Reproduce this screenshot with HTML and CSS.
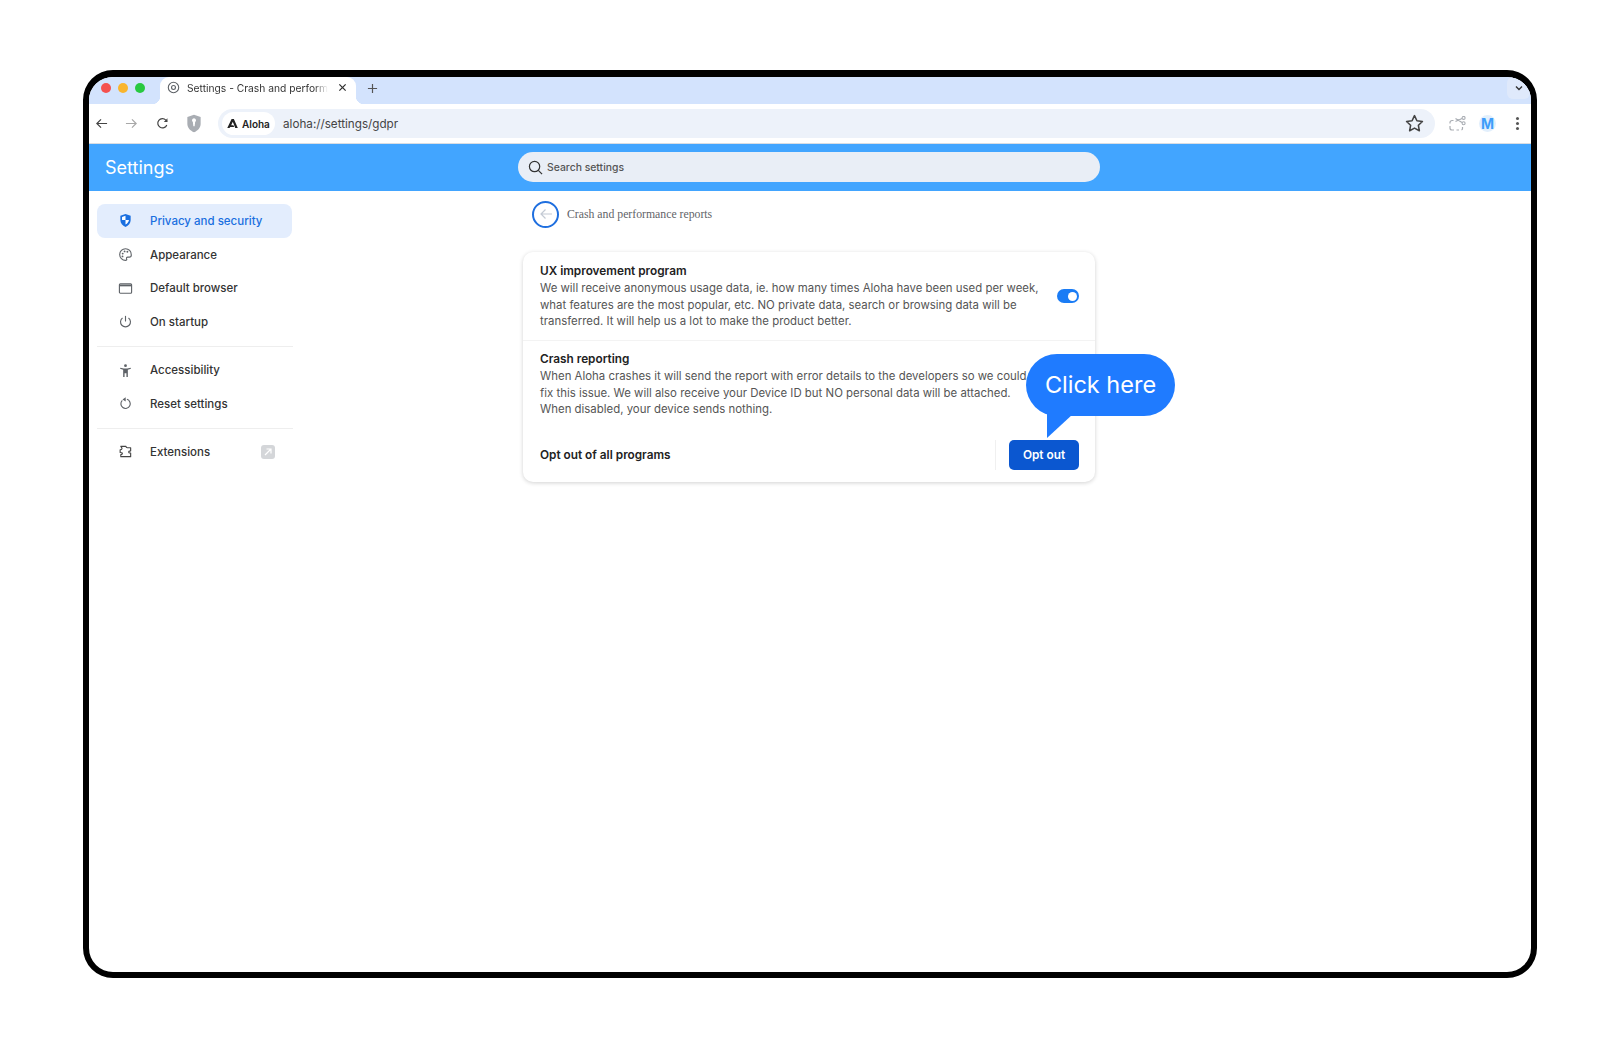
FILE: index.html
```html
<!DOCTYPE html>
<html lang="en">
<head>
  <meta charset="UTF-8">
  <title>Settings - Crash and performance reports</title>
  <link rel="stylesheet" href="styles.css">
</head>
<body>
  <div class="frame">
    <div class="tabstrip">
      <div class="lights">
        <span class="light red"></span>
        <span class="light yellow"></span>
        <span class="light green"></span>
      </div>
      <div class="tab">
        <svg class="tab-icon" viewBox="0 0 14 14"><circle cx="7" cy="7" r="5.6" fill="none" stroke="#5f6368" stroke-width="1.2"/><circle cx="7" cy="7" r="2.1" fill="none" stroke="#5f6368" stroke-width="1.2"/></svg>
        <span class="tab-title">Settings - Crash and performance reports</span>
        <svg class="tab-close" viewBox="0 0 10 10"><path d="M1.5 1.5l7 7M8.5 1.5l-7 7" stroke="#333" stroke-width="1.4" fill="none"/></svg>
      </div>
      <svg class="tab-new" viewBox="0 0 12 12"><path d="M6 1v10M1 6h10" stroke="#555" stroke-width="1.3" fill="none"/></svg>
      <div class="tab-menu">
        <svg viewBox="0 0 10 10" width="10" height="10"><path d="M2 3.500l3 3 3-3" stroke="#333" stroke-width="1.4" fill="none"/></svg>
      </div>
    </div>

    <div class="toolbar">
      <svg class="nav-icon first" viewBox="0 0 14 14"><path d="M13 7H2M6.500 2.500L2 7l4.500 4.500" stroke="#444" stroke-width="1.3" fill="none"/></svg>
      <svg class="nav-icon" viewBox="0 0 14 14"><path d="M1 7h11M7.500 2.500L12 7l-4.500 4.500" stroke="#a8a8a8" stroke-width="1.3" fill="none"/></svg>
      <svg class="nav-icon reload" viewBox="0 0 14 14"><path d="M11.600 8.600A5 5 0 1 1 10.600 3.400L12 4.800" stroke="#444" stroke-width="1.3" fill="none"/><path d="M12.300 1.400v3.900H8.400z" fill="#444"/></svg>
      <svg class="shield" viewBox="0 0 16 20"><path d="M8 .8l7 2.400v7c0 4.200-3 7.300-7 9-4-1.700-7-4.800-7-9v-7z" fill="#a9adb3"/><path d="M8 4.500a2.200 2.200 0 0 1 1.200 4l-.5 4.500H7.300l-.5-4.500a2.200 2.200 0 0 1 1.200-4z" fill="#fff"/></svg>
      <div class="addressbar">
        <div class="chip">
          <svg class="chip-logo" viewBox="0 0 12 12"><path d="M5 1h2.500L11.800 11H9L6.300 4.200 4.600 8H7l.8 1.800H3.600L2.700 11H.3z" fill="#222"/></svg>
          <span>Aloha</span>
        </div>
        <span class="url">aloha://settings/gdpr</span>
        <svg class="star" viewBox="0 0 18 18"><path d="M9 1.600l2.300 4.800 5.200.7-3.800 3.600.9 5.200L9 13.400 4.400 15.900l.9-5.200L1.500 7.100l5.200-.7z" fill="none" stroke="#444" stroke-width="1.500" stroke-linejoin="round"/></svg>
      </div>
      <svg class="scissors" viewBox="0 0 17 15"><path d="M1 7.500V6.500a2 2 0 0 1 2-2h1.500M1 10v2a2 2 0 0 0 2 2h2M7.500 14H10M12.500 14a1.500 1.500 0 0 0 1-1.500V11M6.500 5.500l6.500-3M6.500 2.500L13 6.500" fill="none" stroke="#a9adb3" stroke-width="1.200"/><circle cx="14.600" cy="1.900" r="1.500" fill="none" stroke="#a9adb3" stroke-width="1.100"/><circle cx="14.600" cy="7.300" r="1.500" fill="none" stroke="#a9adb3" stroke-width="1.100"/></svg>
      <div class="avatar">M</div>
      <div class="kebab"><span></span><span></span><span></span></div>
    </div>

    <div class="settings-head">
      <div class="settings-title">Settings</div>
      <div class="search">
        <svg class="search-icon" viewBox="0 0 16 16"><circle cx="7" cy="7" r="5.500" fill="none" stroke="#333" stroke-width="1.300"/><path d="M11 11l4 4" stroke="#333" stroke-width="1.300"/></svg>
        <span>Search settings</span>
      </div>
    </div>

    <div class="content">
      <div class="sidebar">
        <div class="nav-item active">
          <svg class="item-icon" viewBox="0 0 16 16"><path d="M8 1l5.500 2v4.500c0 3.500-2.300 6-5.500 7.500-3.200-1.500-5.500-4-5.500-7.500V3z" fill="#1a6fe0"/><path d="M8 3v4.500h3.700c-.2 2-1.600 3.700-3.700 4.800V7.500H4.300V4.200z" fill="#fff"/></svg>
          <span>Privacy and security</span>
        </div>
        <div class="nav-item">
          <svg class="item-icon" viewBox="0 0 16 16"><path d="M8 1.800a6.200 6.200 0 1 0 0 12.400c1.200 0 1.500-.8 1.200-1.500-.4-1 .1-1.900 1.200-1.900h1.700c1.300 0 2.100-1 2.100-2.300C14.200 4.600 11.500 1.800 8 1.800z" fill="none" stroke="#5f6368" stroke-width="1.200"/><circle cx="5" cy="7" r="1" fill="#5f6368"/><circle cx="7" cy="4.700" r="1" fill="#5f6368"/><circle cx="10" cy="5" r="1" fill="#5f6368"/><circle cx="4.800" cy="10" r="1" fill="#5f6368"/></svg>
          <span>Appearance</span>
        </div>
        <div class="nav-item">
          <svg class="item-icon" viewBox="0 0 16 16"><rect x="1.500" y="3" width="13" height="10" rx="1" fill="none" stroke="#5f6368" stroke-width="1.200"/><path d="M1.500 4.800h13" stroke="#5f6368" stroke-width="1.800"/></svg>
          <span>Default browser</span>
        </div>
        <div class="nav-item">
          <svg class="item-icon" viewBox="0 0 16 16"><path d="M8 2v6" stroke="#5f6368" stroke-width="1.200" fill="none"/><path d="M4.800 4.200a5.300 5.300 0 1 0 6.400 0" stroke="#5f6368" stroke-width="1.200" fill="none"/></svg>
          <span>On startup</span>
        </div>
        <div class="nav-divider"></div>
        <div class="nav-item">
          <svg class="item-icon" viewBox="0 0 16 16"><circle cx="8" cy="2.800" r="1.500" fill="#5f6368"/><path d="M2.500 5l3.800.9h3.400l3.800-.9.300 1.200-3.300 1V15H9V11H7v4H5.500V7.200L2.200 6.200z" fill="#5f6368"/></svg>
          <span>Accessibility</span>
        </div>
        <div class="nav-item">
          <svg class="item-icon" viewBox="0 0 16 16"><path d="M9.500 3.500A5 5 0 1 1 4.600 4.700" fill="none" stroke="#5f6368" stroke-width="1.200"/><path d="M8.200 1.300v4.600L4.800 3.600z" fill="#5f6368"/></svg>
          <span>Reset settings</span>
        </div>
        <div class="nav-divider"></div>
        <div class="nav-item">
          <svg class="item-icon" viewBox="0 0 16 16"><path d="M3 2.500h5.500c0 1 .5 1.500 1.500 1.500h3.500v3.300c-1.500 0-2.200.5-2.200 1.200s.7 1.200 2.200 1.200v3.800H3v-2.200c.9 0 1.700-.5 1.700-1.400S3.900 9 2.300 9V6.200c1 0 2-.3 2-1.300S3.500 3.600 3 2.500z" fill="none" stroke="#444" stroke-width="1.200" stroke-linejoin="round"/></svg>
          <span>Extensions</span>
          <span class="ext-link">
            <svg viewBox="0 0 10 10" width="10" height="10"><path d="M2 8l6-6M3.500 2H8v4.500" stroke="#fff" stroke-width="1.200" fill="none"/></svg>
          </span>
        </div>
      </div>

      <div class="main">
        <div class="subpage-head">
          <div class="back-btn">
            <svg viewBox="0 0 14 14" width="14" height="14"><path d="M13 7H2M6.500 2.500L2 7l4.500 4.500" stroke="#c3cad4" stroke-width="1.200" fill="none"/></svg>
          </div>
          <span class="subpage-title">Crash and performance reports</span>
        </div>

        <div class="card">
          <div class="card-row first-row">
            <div class="row-text">
              <div class="row-title">UX improvement program</div>
              <div class="row-desc">We will receive anonymous usage data, ie. how many times Aloha have been used per week, what features are the most popular, etc. NO private data, search or browsing data will be transferred. It will help us a lot to make the product better.</div>
            </div>
            <div class="toggle"><span class="knob"></span></div>
          </div>
          <div class="card-row second-row">
            <div class="row-text">
              <div class="row-title">Crash reporting</div>
              <div class="row-desc">When Aloha crashes it will send the report with error details to the developers so we could fix this issue. We will also receive your Device ID but NO personal data will be attached. When disabled, your device sends nothing.</div>
            </div>
          </div>
          <div class="opt-row">
            <div class="row-title">Opt out of all programs</div>
            <div class="opt-action">
              <button class="opt-btn">Opt out</button>
            </div>
          </div>

          <div class="callout">
            <span>Click here</span>
            <svg class="callout-tail" viewBox="0 0 26 24"><path d="M0 0h26L0 24z" fill="#1f7bff"/></svg>
          </div>
        </div>
      </div>
    </div>
  </div>
</body>
</html>
```

FILE: styles.css
```css
* {
  box-sizing: border-box;
}
body {
  margin: 0;
  padding: 70px 83px 0;
  background: #fff;
  font-family: Inter, "Liberation Sans", sans-serif;
  color: #222;
}
.frame {
  width: 1454px;
  height: 908px;
  border: 6px solid #000;
  border-top-width: 7px;
  border-radius: 30px;
  overflow: hidden;
  background: #fff;
  display: flex;
  flex-direction: column;
}

/* browser chrome */
.tabstrip {
  height: 27px;
  background: #d3e3fd;
  display: flex;
  align-items: center;
  flex-shrink: 0;
}
.lights {
  display: flex;
  gap: 7px;
  padding-left: 12px;
  width: 71px;
  margin-bottom: 5px;
}
.light {
  width: 10px;
  height: 10px;
  border-radius: 50%;
}
.red { background: #f4504e; }
.yellow { background: #f9b52e; }
.green { background: #28c940; }
.tab {
  position: relative;
  width: 196px;
  height: 27px;
  background: #fff;
  border-radius: 9px 9px 0 0;
  display: flex;
  align-items: center;
  padding: 0 0 6px 7px;
  font-size: 10.250px;
  color: #333;
}
.tab::before,
.tab::after {
  content: "";
  position: absolute;
  bottom: 0;
  width: 8px;
  height: 8px;
}
.tab::before {
  left: -8px;
  background: radial-gradient(circle at 0 0, #d3e3fd 8px, #fff 8.5px);
}
.tab::after {
  right: -8px;
  background: radial-gradient(circle at 100% 0, #d3e3fd 8px, #fff 8.5px);
}
.tab-icon {
  width: 13px;
  height: 13px;
  flex-shrink: 0;
}
.tab-title {
  margin-left: 7px;
  width: 141px;
  white-space: nowrap;
  overflow: hidden;
  -webkit-mask-image: linear-gradient(to right, #000 90%, transparent);
  mask-image: linear-gradient(to right, #000 90%, transparent);
}
.tab-close {
  width: 9px;
  height: 9px;
  margin-left: 10px;
}
.tab-new {
  width: 11px;
  height: 11px;
  margin: 0 0 5px 11px;
}
.tab-menu {
  margin-left: auto;
  margin-right: 1px;
  width: 23px;
  height: 22px;
  margin-top: -5px;
  border-radius: 6px;
  background: #dfe9fb;
  display: flex;
  align-items: center;
  justify-content: center;
}
.toolbar {
  height: 40px;
  background: #fff;
  border-bottom: 1px solid #d9dde3;
  display: flex;
  align-items: center;
  flex-shrink: 0;
}
.nav-icon {
  width: 13px;
  height: 13px;
  margin-left: 17px;
}
.nav-icon.first {
  margin-left: 6px;
}
.nav-icon.reload {
  margin-left: 18px;
}
.shield {
  width: 16px;
  height: 19px;
  margin-left: 17px;
}
.addressbar {
  width: 1217px;
  height: 29px;
  margin-left: 16px;
  background: #edf2fa;
  border-radius: 15px;
  display: flex;
  align-items: center;
  padding: 0 11px 0 4px;
}
.chip {
  width: 53px;
  height: 23px;
  background: #fff;
  border-radius: 12px;
  display: flex;
  align-items: center;
  padding-left: 5px;
  font-size: 10px;
  font-weight: 600;
}
.chip-logo {
  width: 11px;
  height: 11px;
  margin-right: 4px;
}
.url {
  margin-left: 8px;
  font-size: 11.700px;
  color: #444;
}
.star {
  width: 19px;
  height: 19px;
  margin-left: auto;
}
.scissors {
  width: 17px;
  height: 15px;
  margin-left: 14px;
}
.avatar {
  width: 17px;
  height: 17px;
  margin-left: 13px;
  border-radius: 50%;
  background: #e2effc;
  color: #3e9dfa;
  font-size: 14px;
  font-weight: 700;
  line-height: 17px;
  text-align: center;
}
.kebab {
  margin-left: 20px;
  display: flex;
  flex-direction: column;
  gap: 2px;
}
.kebab span {
  width: 3px;
  height: 3px;
  border-radius: 50%;
  background: #555;
}

/* settings header */
.settings-head {
  height: 47px;
  background: #42a5ff;
  display: flex;
  align-items: center;
  flex-shrink: 0;
}
.settings-title {
  width: 429px;
  padding-left: 16px;
  color: #fff;
  font-size: 18px;
}
.search {
  width: 582px;
  height: 30px;
  margin-bottom: 2px;
  background: #e9eef6;
  border-radius: 15px;
  display: flex;
  align-items: center;
  padding: 1px 0 0 10px;
  font-size: 10.400px;
  font-weight: 500;
  color: #555;
}
.search-icon {
  width: 15px;
  height: 15px;
  margin-right: 4px;
}

/* page */
.content {
  flex: 1;
  display: flex;
}
.sidebar {
  width: 202px;
  margin-left: 8px;
  padding-top: 13px;
  flex-shrink: 0;
}
.nav-item {
  height: 33.700px;
  width: 195px;
  border-radius: 8px;
  display: flex;
  align-items: center;
  padding-left: 21px;
  font-size: 11.500px;
  font-weight: 500;
  color: #333;
}
.nav-item.active {
  background: #e3edfd;
  color: #1a6fe0;
}
.item-icon {
  width: 15px;
  height: 15px;
  margin-right: 17px;
  flex-shrink: 0;
}
.nav-divider {
  width: 196px;
  height: 1px;
  background: #eeeeee;
  margin: 7px 0 6.500px;
}
.ext-link {
  margin-left: auto;
  margin-right: 17px;
  width: 14px;
  height: 14px;
  border-radius: 3px;
  background: #d4d6d9;
  display: flex;
  align-items: center;
  justify-content: center;
}
.main {
  margin-left: 224px;
  width: 572px;
}
.subpage-head {
  display: flex;
  align-items: center;
  height: 28px;
  margin-top: 9px;
  padding-left: 9px;
}
.back-btn {
  width: 27px;
  height: 27px;
  border: 2px solid #1f6fdf;
  border-radius: 50%;
  display: flex;
  align-items: center;
  justify-content: center;
  flex-shrink: 0;
}
.subpage-title {
  margin-left: 8px;
  font-family: "Liberation Serif", serif;
  font-size: 11.750px;
  color: #5f6368;
}
.card {
  position: relative;
  margin-top: 24px;
  height: 230px;
  background: #fff;
  border-radius: 10px;
  box-shadow: 0 1px 4px rgba(0, 0, 0, 0.18);
}
.card-row {
  display: flex;
  align-items: center;
  padding: 0 16px 0 17px;
  border-bottom: 1px solid #f3f3f3;
}
.first-row {
  height: 89px;
}
.second-row {
  height: 89px;
  padding-bottom: 3px;
  border-bottom: 0;
}
.row-text {
  width: 503px;
}
.second-row .row-text {
  width: 498px;
}
.row-title {
  font-size: 11.800px;
  font-weight: 600;
  line-height: 18px;
  color: #222;
}
.row-desc {
  font-size: 11.420px;
  line-height: 16.600px;
  color: #555;
}
.toggle {
  width: 22px;
  height: 14px;
  margin-left: auto;
  border-radius: 7px;
  background: #1a7cf5;
  position: relative;
  flex-shrink: 0;
}
.knob {
  position: absolute;
  top: 2.500px;
  right: 2.500px;
  width: 9px;
  height: 9px;
  border-radius: 50%;
  background: #fff;
}
.opt-row {
  display: flex;
  align-items: center;
  justify-content: space-between;
  height: 50px;
  padding: 0 16px 0 17px;
}
.opt-action {
  border-left: 1px solid #f0f0f0;
  padding-left: 13px;
  height: 30px;
}
.opt-btn {
  display: block;
  width: 70px;
  height: 30px;
  border: 0;
  border-radius: 5px;
  background: #0b57d0;
  color: #fff;
  font-family: inherit;
  font-size: 11.800px;
  font-weight: 600;
}
.callout {
  position: absolute;
  left: 503px;
  top: 102px;
  width: 149px;
  height: 62px;
  padding-bottom: 1px;
  border-radius: 31px;
  background: #1f7bff;
  color: #fff;
  font-family: Inter, sans-serif;
  font-size: 23.500px;
  display: flex;
  align-items: center;
  justify-content: center;
}
.callout-tail {
  position: absolute;
  left: 21px;
  top: 60px;
  width: 26px;
  height: 24px;
}
```
